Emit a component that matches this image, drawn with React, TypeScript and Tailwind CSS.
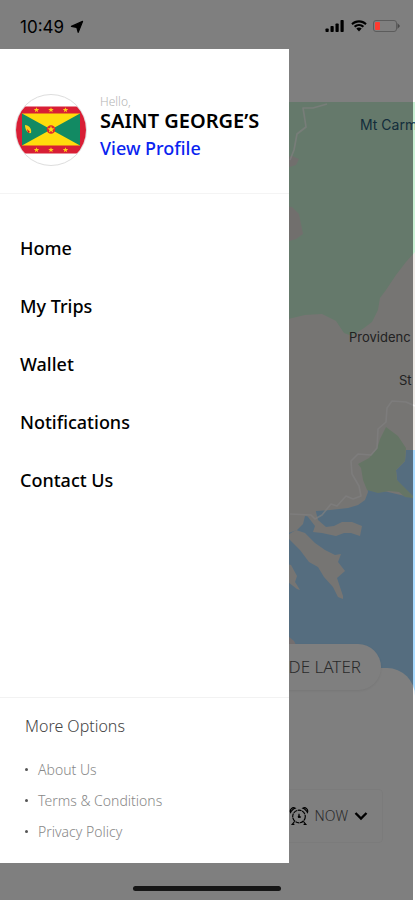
import * as React from "react";
import { clsx } from "clsx";

type DrawerItem = {
  label: string;
  href: string;
};

const mainItems: DrawerItem[] = [
  { label: "Home", href: "#home" },
  { label: "My Trips", href: "#trips" },
  { label: "Wallet", href: "#wallet" },
  { label: "Notifications", href: "#notifications" },
  { label: "Contact Us", href: "#contact" },
];

const moreItems: DrawerItem[] = [
  { label: "About Us", href: "#about" },
  { label: "Terms & Conditions", href: "#terms" },
  { label: "Privacy Policy", href: "#privacy" },
];

function StatusBar() {
  return (
    <div className="flex h-[49px] items-center justify-between pr-3 pl-5 font-['Inter',sans-serif] text-black">
      <div className="flex items-center gap-[6px] pt-1">
        <span className="text-[17px] leading-5">10:49</span>
        <svg viewBox="0 0 14 14" className="size-[14px]" aria-hidden="true">
          <path
            d="M12.6 1.4L8.2 12.4L6.8 7.4L1.4 6.4Z"
            fill="#000"
            stroke="#000"
            strokeWidth="1.2"
            strokeLinejoin="round"
          />
        </svg>
      </div>
      <div className="flex items-center gap-[6px] pt-[3px]">
        <svg viewBox="0 0 20 12" className="h-3 w-5" aria-hidden="true">
          <rect x="0.5" y="8.5" width="3.2" height="3.5" rx="0.8" />
          <rect x="5.5" y="6" width="3.2" height="6" rx="0.8" />
          <rect x="10.5" y="3.5" width="3.2" height="8.5" rx="0.8" />
          <rect x="15.5" y="0" width="3.2" height="12" rx="0.8" />
        </svg>
        <svg viewBox="0 0 16 12" className="h-3 w-4" aria-hidden="true">
          <path d="M8 0.3C11 0.3 13.7 1.5 15.7 3.4L14.3 4.9C12.6 3.3 10.4 2.4 8 2.4S3.4 3.3 1.7 4.9L0.3 3.4C2.3 1.5 5 0.3 8 0.3Z" />
          <path d="M8 4C10 4 11.8 4.8 13.1 6L11.7 7.5C10.7 6.6 9.4 6 8 6S5.3 6.6 4.3 7.5L2.9 6C4.2 4.8 6 4 8 4Z" />
          <path d="M8 7.6C9.1 7.6 10 8 10.7 8.6L8 11.6L5.3 8.6C6 8 6.9 7.6 8 7.6Z" />
        </svg>
        <svg viewBox="0 0 28 12" className="h-3 w-7" aria-hidden="true">
          <rect x="0.5" y="0.5" width="23" height="11" rx="2.5" fill="none" stroke="#5c5c5c" />
          <path d="M24.5 3L27 6L24.5 9Z" fill="#4a4a4a" />
          <rect x="2" y="2" width="5" height="8" rx="1" fill="#ff3b30" />
        </svg>
      </div>
    </div>
  );
}

function CoastMap() {
  return (
    <svg
      viewBox="0 0 415 600"
      preserveAspectRatio="xMaxYMin slice"
      className="block h-[600px] w-full"
      role="img"
      aria-label="Map"
    >
      <rect width="415" height="600" fill="#edeae6" />
      {/* forest */}
      <path
        d="M280 0H415V150L406 160L396 173L386 188L380 196L378 208L372 220L364 226L352 234L344 231L336 219L322 212L305 213L280 219V0Z"
        fill="#cbf2d6"
      />
      <path d="M280 104L292 105L299 112L303 132L296 137L280 142Z" fill="#e2dedb" />
      <path d="M280 56L292 54L299 57L296 63L280 68Z" fill="#e2dedb" />
      {/* sea */}
      <path
        d="M415 348H406L405 359L396 368L397 378L402 386L405 394L367 385L368 390L365 398L358 403L348 406L330 408L316 409L315 415L305 414L303 422L297 428L280 434V600H415Z"
        fill="#aadbff"
      />
      <path
        d="M305 411L316 410L318 418L326 425L334 424L342 420L352 420L362 424L360 434L351 431L344 431L336 434L322 431L313 430L315 424Z"
        fill="#edeae6"
      />
      <path
        d="M286 434L296 428L305 431L315 441L325 448L335 453L341 452L338 460L345 469L337 476L343 494L343 497L338 495L333 485L324 475L318 465L309 460L300 448L290 438Z"
        fill="#edeae6"
      />
      <path d="M280 460L291 463L297 474L295 480L300 488L297 487L288 480L280 478Z" fill="#edeae6" />
      <path d="M288 534L294 539L298 547L295 548L288 545Z" fill="#e6dcde" />
      <path
        d="M386 325L398 334L406 346L405 359L396 368L397 378L404 385L413 394V396L405 395L399 390L389 389L378 391L367 388L363 378L361 366L358 362L369 356L377 347L380 337Z"
        fill="#cbebca"
      />
      {/* roads */}
      <g fill="none" stroke="#fff" strokeWidth="1.6" strokeLinejoin="round" opacity="0.7">
        <path d="M327 2L313 6L303 6L304 12L306 25L297 32L294 48L290 58" />
        <path d="M415 304L406 300L392 299L387 306L386 320L378 327L377 346L371 353L358 352L351 359L352 372L359 384L361 394L353 397L346 394L337 404L331 402L322 413L315 417L311 413L290 412" />
      </g>
      <g fontFamily="Inter, Arial, sans-serif">
        <text x="360" y="28" fontSize="14" fill="#285a78">
          Mt Carm
        </text>
        <text x="349" y="240" fontSize="13" fill="#444">
          Providenc
        </text>
        <text x="399" y="283" fontSize="13" fill="#444">
          St
        </text>
      </g>
    </svg>
  );
}

function AlarmIcon() {
  return (
    <svg
      viewBox="0 0 20 20"
      className="size-5"
      fill="none"
      stroke="#000"
      strokeWidth="1.2"
      aria-hidden="true"
    >
      <circle cx="10" cy="10.5" r="6.3" strokeDasharray="4 0.6" />
      <path d="M1.6 6.4C0.3 3.4 3.6 0.6 6.2 2.2L4.4 3L2.6 4.8Z" />
      <path d="M18.4 6.4C19.7 3.4 16.4 0.6 13.8 2.2L15.6 3L17.4 4.8Z" />
      <path d="M5.5 15.5L3.2 18.4H5.4M14.5 15.5L16.8 18.4H14.6M10 7.8V10.6L12 11.2" />
      <circle cx="10" cy="10.8" r="0.7" fill="#000" />
    </svg>
  );
}

function BookingScreen() {
  return (
    <div className="flex min-h-screen flex-col overflow-hidden bg-white pt-[102px]">
      <CoastMap />
      <section className="-mt-[34px] flex grow flex-col items-end rounded-t-[28px] bg-white">
        <button
          type="button"
          className="-mt-6 mr-[34px] h-[46px] w-[180px] rounded-full bg-white pr-5 text-right text-[17px] font-light text-[#555] shadow-[0_1px_3px_rgba(0,0,0,0.08)]"
        >
          RIDE LATER
        </button>
        <button
          type="button"
          className="mt-[99px] mr-8 flex h-[54px] items-center gap-[6px] rounded border border-[#f6f6f6] pr-[14px] pl-10 text-sm font-light text-[#555]"
        >
          <AlarmIcon />
          NOW
          <svg viewBox="0 0 14 10" className="h-[10px] w-[14px]" aria-hidden="true">
            <path d="M1.5 2L7 7.5L12.5 2" fill="none" stroke="#000" strokeWidth="2.4" />
          </svg>
        </button>
      </section>
    </div>
  );
}

function FlagAvatar() {
  return (
    <svg
      viewBox="0 0 72 72"
      className="size-[72px] shrink-0"
      role="img"
      aria-label="Flag of Grenada"
    >
      <defs>
        <clipPath id="avatar">
          <circle cx="36" cy="36" r="35" />
        </clipPath>
      </defs>
      <circle cx="36" cy="36" r="35.5" fill="#fff" stroke="#ddd" />
      <g clipPath="url(#avatar)">
        <rect y="12.5" width="72" height="47" fill="#d81e35" />
        <rect x="7" y="19.5" width="58" height="32" fill="#ffdc0c" />
        <path d="M7 19.5L36 35.5L7 51.5ZM65 19.5L36 35.5L65 51.5Z" fill="#128a63" />
        <circle cx="36" cy="35.5" r="4.3" fill="#e0262e" />
        <path
          d="M36 31.8L36.9 34.3L39.5 34.4L37.4 36L38.2 38.5L36 37L33.8 38.5L34.6 36L32.5 34.4L35.1 34.3Z"
          fill="#ffdc0c"
        />
        <path d="M10 31C14 31 17 35 16 39C13 40 10 36 10 31Z" fill="#fcd116" />
        <path d="M12 35L15 38L13 39Z" fill="#ce1126" />
        {[21.5, 36, 50.5].map((x) => (
          <g key={x} fill="#fcd116">
            <path
              d="M0 -2.8L0.7 -0.9L2.7 -0.9L1.1 0.4L1.7 2.3L0 1.1L-1.7 2.3L-1.1 0.4L-2.7 -0.9L-0.7 -0.9Z"
              transform={`translate(${x} 16)`}
            />
            <path
              d="M0 -2.8L0.7 -0.9L2.7 -0.9L1.1 0.4L1.7 2.3L0 1.1L-1.7 2.3L-1.1 0.4L-2.7 -0.9L-0.7 -0.9Z"
              transform={`translate(${x} 56)`}
            />
          </g>
        ))}
      </g>
    </svg>
  );
}

function Drawer({ className }: { className?: string }) {
  return (
    <aside className={clsx("flex flex-col bg-white", className)}>
      <header className="flex h-[145px] items-center gap-[13px] border-b border-[#f4f4f4] pt-[18px] pl-[15px]">
        <FlagAvatar />
        <div className="flex flex-col items-start pb-1 whitespace-nowrap">
          <span className="text-xs leading-4 font-light text-[#b5b5b5]">Hello,</span>
          <span className="text-xl leading-[22px] font-semibold text-black">
            SAINT GEORGE’S
          </span>
          <a href="#profile" className="mt-[2px] text-lg leading-7 font-medium text-[#0a24f0]">
            View Profile
          </a>
        </div>
      </header>

      <nav aria-label="Main" className="grow pt-[25px] pl-5">
        <ul>
          {mainItems.map((item) => (
            <li key={item.href}>
              <a
                href={item.href}
                className="block text-lg leading-[58px] font-medium text-black"
              >
                {item.label}
              </a>
            </li>
          ))}
        </ul>
      </nav>

      <nav aria-label="More options" className="border-t border-[#f2f2f2] pt-4 pb-4 pl-[25px]">
        <h2 className="text-base leading-6 font-light text-[#444]">More Options</h2>
        <ul className="pt-4">
          {moreItems.map((item) => (
            <li key={item.href} className="flex items-center gap-[10px]">
              <span className="size-[3px] rounded-full bg-[#555]" />
              <a
                href={item.href}
                className="text-sm leading-[31px] font-light text-[#888]"
              >
                {item.label}
              </a>
            </li>
          ))}
        </ul>
      </nav>
    </aside>
  );
}

export default function App() {
  return (
    <div className="relative min-h-screen overflow-hidden font-['Noto_Sans',sans-serif]">
      <BookingScreen />
      <div className="absolute inset-y-0 right-[2px] left-0 flex flex-col bg-black/50">
        <StatusBar />
        <Drawer className="w-[70%] grow" />
        <div className="flex h-[37px] items-end justify-center pb-[9px]">
          <span className="h-[5px] w-[148px] rounded-full bg-[#161616]" />
        </div>
      </div>
    </div>
  );
}
